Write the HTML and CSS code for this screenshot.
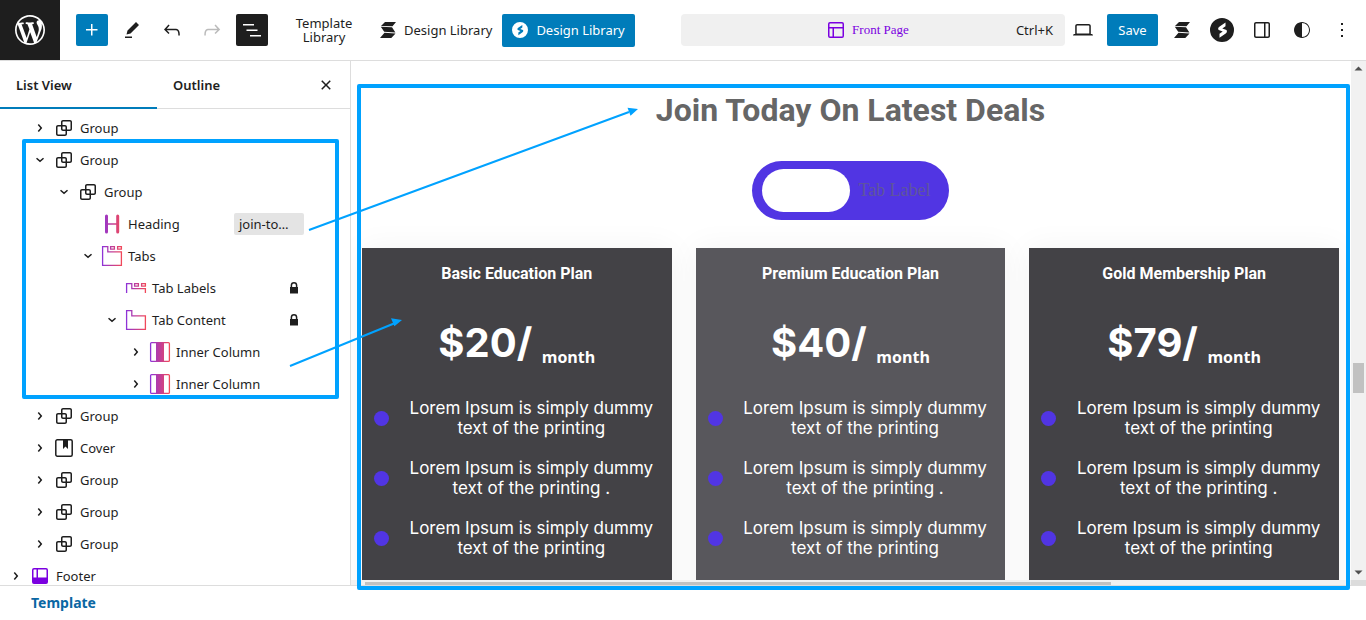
FILE: index.html
```html
<!DOCTYPE html>
<html lang="en">
<head>
  <meta charset="UTF-8">
  <meta name="viewport" content="width=device-width, initial-scale=1.0">
  <title>Front Page | Site Editor</title>
  <link rel="stylesheet" href="styles.css">
</head>
<body>
  <!-- shared icons -->
  <svg class="sprite" aria-hidden="true">
    <defs>
      <linearGradient id="pink" gradientUnits="userSpaceOnUse" x1="2" y1="0" x2="22" y2="0">
        <stop offset="0" stop-color="#8c33da"/>
        <stop offset="1" stop-color="#f34957"/>
      </linearGradient>
      <symbol id="right" viewBox="0 0 24 24"><path d="M10.86 8.04l3.42 3.99-3.42 3.99-1.14-.98 2.58-3.01-2.58-3.01z"/></symbol>
      <symbol id="down" viewBox="0 0 24 24"><path d="M8.04 10.86l3.99 3.42 3.99-3.42-.98-1.14-3.01 2.58-3.01-2.58z"/></symbol>
      <symbol id="group" viewBox="0 0 24 24"><path d="M18 4h-7c-1.1 0-2 .9-2 2v3H6c-1.1 0-2 .9-2 2v7c0 1.1.9 2 2 2h7c1.1 0 2-.9 2-2v-3h3c1.1 0 2-.9 2-2V6c0-1.1-.9-2-2-2zm-4.5 14c0 .3-.2.5-.5.5H6c-.3 0-.5-.2-.5-.5v-7c0-.3.2-.5.5-.5h3V13c0 1.1.9 2 2 2h2.5v3zm0-4.5H11c-.3 0-.5-.2-.5-.5v-2.5H13c.3 0 .5.2.5.5v2.5zm5-.5c0 .3-.2.5-.5.5h-3V11c0-1.1-.9-2-2-2h-2.5V6c0-.3.2-.5.5-.5h7c.3 0 .5.2.5.5v7z"/></symbol>
      <symbol id="cover" viewBox="0 0 24 24"><rect x="3.8" y="3.8" width="16.4" height="16.4" rx="1.5" fill="none" stroke="currentColor" stroke-width="1.5"/><path d="M11 4h5v9l-2.5-2.5L11 13z"/></symbol>
      <symbol id="lock" viewBox="0 0 24 24"><path d="M8 11h8v6.5H8z"/><path d="M9.4 11.5V9.3a2.6 2.6 0 0 1 5.2 0v2.2" fill="none" stroke="currentColor" stroke-width="1.5"/></symbol>
      <symbol id="heading" viewBox="0 0 24 24"><path fill="url(#pink)" d="M5 4a1.5 1.5 0 0 1 3 0v7.2h8.2V4a1.5 1.5 0 0 1 3 0v16a1.5 1.5 0 0 1-3 0v-7.2H8V20a1.5 1.5 0 0 1-3 0z"/></symbol>
      <symbol id="tabs" viewBox="0 0 24 24"><path fill="none" stroke="url(#pink)" stroke-width="1.3" d="M2.6 2.6h5.2v5.2h13.6v13.6H2.6zM10.6 2.6h3.8v2.6h-3.8zM17.6 2.6h3.8v2.6h-3.8z"/></symbol>
      <symbol id="labels" viewBox="0 0 24 24"><path fill="none" stroke="url(#pink)" stroke-width="1.3" d="M2.6 17V7.6h5.2v5h13.6V17M10.6 7.6h3.8v2.6h-3.8zM17.6 7.6h3.8v2.6h-3.8z"/></symbol>
      <symbol id="content" viewBox="0 0 24 24"><path fill="none" stroke="url(#pink)" stroke-width="1.3" d="M2.6 2.6h5.2v5.2h13.6v13.6H2.6z"/></symbol>
      <symbol id="column" viewBox="0 0 24 24"><rect x="2.6" y="2.6" width="18.8" height="18.8" rx="1" fill="none" stroke="url(#pink)" stroke-width="1.3"/><path fill="url(#pink)" d="M8 2.5h8v19H8z"/></symbol>
      <symbol id="ess" viewBox="0 0 16 16"><path d="M5 0h11l-3.5 4.2L1 4zM.8 4.8L12 5.3l3.4 5.2-11.2-.7zM4.5 10.8l11 .6L11.300 16H0z"/></symbol>
      <symbol id="bolt" viewBox="0 0 24 24"><path fill-rule="evenodd" d="M12 0a12 12 0 1 0 0 24 12 12 0 0 0 0-24zm3.5 4.5v3.700l-3.2 2.2 4.2 1.5c.8 1.3.4 2.600-.8 3.5l-6.200 4.300v-3.900l3.200-2.200-4-1.500c-.9-1.2-.6-2.600.6-3.400z"/></symbol>
    </defs>
  </svg>

  <header class="topbar">
    <a class="logo" href="#" aria-label="Site home">
      <svg viewBox="-2 -2 24 24"><path d="M20 10c0-5.51-4.49-10-10-10C4.48 0 0 4.49 0 10c0 5.52 4.48 10 10 10 5.51 0 10-4.48 10-10zM7.78 15.37L4.37 6.22c.55-.02 1.17-.08 1.17-.08.5-.06.44-1.13-.06-1.11 0 0-1.45.11-2.37.11-.18 0-.37 0-.58-.01C4.12 2.69 6.87 1.11 10 1.11c2.33 0 4.45.87 6.05 2.34-.68-.11-1.65.39-1.65 1.58 0 .74.45 1.36.9 2.1.35.61.55 1.36.55 2.46 0 1.49-1.4 5-1.4 5l-3.03-8.37c.54-.02.82-.17.82-.17.5-.05.44-1.25-.06-1.22 0 0-1.44.12-2.38.12-.87 0-2.33-.12-2.33-.12-.5-.03-.56 1.2-.06 1.22l.92.08 1.26 3.41zM17.41 10c.24-.64.74-1.87.43-4.25.7 1.29 1.05 2.71 1.05 4.25 0 3.29-1.73 6.24-4.4 7.78.97-2.59 1.94-5.2 2.92-7.78zM6.1 18.09C3.12 16.65 1.11 13.53 1.11 10c0-1.3.23-2.48.72-3.59C3.25 10.3 4.67 14.2 6.1 18.09zm4.03-6.63l2.58 6.98c-.86.29-1.76.45-2.71.45-.79 0-1.57-.11-2.29-.33.81-2.38 1.62-4.74 2.42-7.1z"/></svg>
    </a>
    <div class="tools">
      <button class="tool primary" aria-label="Add block"><svg class="icon" viewBox="0 0 24 24"><path d="M11 12.5V17.5H12.5V12.5H17.5V11H12.5V6H11V11H6V12.5H11Z"/></svg></button>
      <button class="tool" aria-label="Edit"><svg class="icon" viewBox="0 0 24 24"><path d="m19 7-3-3-8.5 8.5-1 4 4-1L19 7Zm-7 11.5H5V20h7v-1.5Z"/></svg></button>
      <button class="tool" aria-label="Undo"><svg class="icon" viewBox="0 0 24 24"><path d="M18.3 11.7c-.6-.6-1.4-.9-2.3-.9H6.7l2.9-3.3-1.1-1-4.5 5L8.5 16l1-1-2.7-2.7H16c.5 0 .9.2 1.3.5 1 1 1 3.4 1 4.5v.3h1.5v-.2c0-1.5 0-4.3-1.5-5.7z"/></svg></button>
      <button class="tool" aria-label="Redo" disabled><svg class="icon" viewBox="0 0 24 24"><path d="M15.6 6.5l-1.1 1 2.9 3.3H8c-.9 0-1.7.3-2.3.9-1.4 1.5-1.4 4.2-1.4 5.6v.2h1.5v-.3c0-1.1 0-3.5 1-4.5.3-.3.7-.5 1.3-.5h9.2L14.5 15l1.1 1.1 4.6-4.6-4.6-5z"/></svg></button>
      <button class="tool dark" aria-label="List view"><svg class="icon" viewBox="0 0 24 24"><path d="M3 6h11v1.5H3V6Zm3.5 5.5h11V13h-11v-1.5ZM21 17H10v1.5h11V17Z"/></svg></button>
    </div>
    <div class="libraries">
      <button class="template-library">Template Library</button>
      <button class="library"><svg class="small-icon"><use href="#ess"/></svg>Design Library</button>
      <button class="library primary"><svg class="small-icon"><use href="#bolt"/></svg>Design Library</button>
    </div>
    <button class="command">
      <span class="page-name"><svg class="icon" viewBox="0 0 24 24"><path d="M18 5.5H6a.5.5 0 00-.5.5v3h13V6a.5.5 0 00-.5-.5zm.5 5H10v8h8a.5.5 0 00.5-.5v-7.5zm-10 0h-3V18a.5.5 0 00.5.5h2.5v-8zM6 4h12a2 2 0 012 2v12a2 2 0 01-2 2H6a2 2 0 01-2-2V6a2 2 0 012-2z" fill-rule="evenodd"/></svg>Front Page</span>
      <span>Ctrl+K</span>
    </button>
    <div class="settings">
      <button class="tool" aria-label="View"><svg class="icon" viewBox="0 0 24 24"><path d="M20.5 16h-.7V8c0-1.1-.9-2-2-2H6.2c-1.1 0-2 .9-2 2v8h-.7c-.8 0-1.5.7-1.5 1.5h20c0-.8-.7-1.5-1.5-1.5zM5.7 8c0-.3.2-.5.5-.5h11.6c.3 0 .5.2.5.5v7.6H5.7V8z"/></svg></button>
      <button class="save primary">Save</button>
      <button class="tool" aria-label="Blocks settings"><svg class="small-icon"><use href="#ess"/></svg></button>
      <button class="tool" aria-label="Page settings"><svg class="icon"><use href="#bolt"/></svg></button>
      <button class="tool" aria-label="Sidebar"><svg class="icon" viewBox="0 0 24 24"><path d="M18 4H6c-1.1 0-2 .9-2 2v12c0 1.1.9 2 2 2h12c1.1 0 2-.9 2-2V6c0-1.1-.9-2-2-2zm-4 14.5H6c-.3 0-.5-.2-.5-.5V6c0-.3.2-.5.5-.5h8v13zm4.5-.5c0 .3-.2.5-.5.5h-2.5v-13H18c.3 0 .5.2.5.5v12z"/></svg></button>
      <button class="tool" aria-label="Styles"><svg class="icon" viewBox="0 0 24 24"><path d="M12 4c-4.4 0-8 3.6-8 8s3.6 8 8 8 8-3.6 8-8-3.6-8-8-8zm0 15V5c3.9 0 7 3.1 7 7s-3.1 7-7 7z"/></svg></button>
      <button class="tool" aria-label="Options"><svg class="icon" viewBox="0 0 24 24"><path d="M13 19h-2v-2h2v2zm0-6h-2v-2h2v2zm0-6h-2V5h2v2z"/></svg></button>
    </div>
  </header>

  <div class="editor">
    <aside class="sidebar">
      <div class="sidebar-tabs">
        <button class="tab active">List View</button>
        <button class="tab">Outline</button>
        <button class="tool close" aria-label="Close"><svg class="icon" viewBox="0 0 24 24"><path d="M12 13.06l3.712 3.713 1.061-1.06L13.061 12l3.712-3.712-1.06-1.06L12 10.938 8.288 7.227l-1.061 1.06L10.939 12l-3.712 3.712 1.06 1.061L12 13.061z"/></svg></button>
      </div>
      <ul class="tree">
        <li class="level-1"><svg class="icon"><use href="#right"/></svg><svg class="icon"><use href="#group"/></svg><a href="#">Group</a></li>
        <li class="level-1"><svg class="icon"><use href="#down"/></svg><svg class="icon"><use href="#group"/></svg><a href="#">Group</a></li>
        <li class="level-2"><svg class="icon"><use href="#down"/></svg><svg class="icon"><use href="#group"/></svg><a href="#">Group</a></li>
        <li class="level-4"><svg class="icon"><use href="#heading"/></svg><a href="#">Heading</a><span class="anchor">join-to…</span></li>
        <li class="level-3"><svg class="icon"><use href="#down"/></svg><svg class="icon"><use href="#tabs"/></svg><a href="#">Tabs</a></li>
        <li class="level-5"><svg class="icon"><use href="#labels"/></svg><a href="#">Tab Labels</a><svg class="icon lock"><use href="#lock"/></svg></li>
        <li class="level-4"><svg class="icon"><use href="#down"/></svg><svg class="icon"><use href="#content"/></svg><a href="#">Tab Content</a><svg class="icon lock"><use href="#lock"/></svg></li>
        <li class="level-5"><svg class="icon"><use href="#right"/></svg><svg class="icon"><use href="#column"/></svg><a href="#">Inner Column</a></li>
        <li class="level-5"><svg class="icon"><use href="#right"/></svg><svg class="icon"><use href="#column"/></svg><a href="#">Inner Column</a></li>
        <li class="level-1"><svg class="icon"><use href="#right"/></svg><svg class="icon"><use href="#group"/></svg><a href="#">Group</a></li>
        <li class="level-1"><svg class="icon"><use href="#right"/></svg><svg class="icon"><use href="#cover"/></svg><a href="#">Cover</a></li>
        <li class="level-1"><svg class="icon"><use href="#right"/></svg><svg class="icon"><use href="#group"/></svg><a href="#">Group</a></li>
        <li class="level-1"><svg class="icon"><use href="#right"/></svg><svg class="icon"><use href="#group"/></svg><a href="#">Group</a></li>
        <li class="level-1"><svg class="icon"><use href="#right"/></svg><svg class="icon"><use href="#group"/></svg><a href="#">Group</a></li>
        <li><svg class="icon"><use href="#right"/></svg><svg class="icon purple" viewBox="0 0 24 24"><path fill-rule="evenodd" d="M18 5.5h-8v8h8.5V6a.5.5 0 00-.5-.5zm-9.5 8h-3V6a.5.5 0 01.5-.5h2.5v8zM6 4h12a2 2 0 012 2v12a2 2 0 01-2 2H6a2 2 0 01-2-2V6a2 2 0 012-2z"/></svg><a href="#">Footer</a></li>
      </ul>
    </aside>

    <div class="stage">
      <main class="canvas">
        <h1>Join Today On Latest Deals</h1>
        <div class="switch">
          <button class="switch-on" aria-label="First tab"></button>
          <button>Tab Label</button>
        </div>
        <div class="plans">
          <section class="plan">
            <h2>Basic Education Plan</h2>
            <p class="price">$20/ <span>month</span></p>
            <ul>
              <li><span>Lorem Ipsum is simply dummy text of the printing</span></li>
              <li><span>Lorem Ipsum is simply dummy text of the printing .</span></li>
              <li><span>Lorem Ipsum is simply dummy text of the printing</span></li>
            </ul>
          </section>
          <section class="plan light">
            <h2>Premium Education Plan</h2>
            <p class="price">$40/ <span>month</span></p>
            <ul>
              <li><span>Lorem Ipsum is simply dummy text of the printing</span></li>
              <li><span>Lorem Ipsum is simply dummy text of the printing .</span></li>
              <li><span>Lorem Ipsum is simply dummy text of the printing</span></li>
            </ul>
          </section>
          <section class="plan">
            <h2>Gold Membership Plan</h2>
            <p class="price">$79/ <span>month</span></p>
            <ul>
              <li><span>Lorem Ipsum is simply dummy text of the printing</span></li>
              <li><span>Lorem Ipsum is simply dummy text of the printing .</span></li>
              <li><span>Lorem Ipsum is simply dummy text of the printing</span></li>
            </ul>
          </section>
        </div>
      </main>
      <div class="scroll-y">
        <svg viewBox="0 0 15 15"><path d="M3.5 9.5h8l-4-4z"/></svg>
        <div class="thumb"></div>
        <svg viewBox="0 0 15 15"><path d="M3.5 5.5h8l-4 4z"/></svg>
      </div>
      <div class="scroll-x"><div class="thumb"></div></div>
      <div class="corner"></div>
    </div>
  </div>

  <footer class="breadcrumb"><a href="#">Template</a></footer>

  <!-- callouts drawn over the editor -->
  <div class="frame frame-list"></div>
  <div class="frame frame-canvas"></div>
  <svg class="arrows" aria-hidden="true">
    <path class="line" d="M309 230L629 112M290 366L394 323.5"/>
    <path d="M638 109l-10.5-1.3 3 8zM402 320l-11-1.8 3.4 8z"/>
  </svg>
</body>
</html>
```

FILE: styles.css
```css
* {
  box-sizing: border-box;
}
body {
  margin: 0;
  height: 100vh;
  display: flex;
  flex-direction: column;
  position: relative;
  overflow: hidden;
  background: #fff;
  color: #1e1e1e;
  font-family: "Noto Sans", "Open Sans", sans-serif;
  font-size: 13px;
}
button {
  border: none;
  background: none;
  padding: 0;
  color: inherit;
  font: inherit;
  cursor: pointer;
}
a {
  color: inherit;
  text-decoration: none;
}
h1, h2, p, ul {
  margin: 0;
  padding: 0;
}
ul {
  list-style: none;
}
svg {
  fill: currentColor;
  flex: none;
}
.sprite {
  position: absolute;
  width: 0;
  height: 0;
}
.icon {
  width: 24px;
  height: 24px;
}
.small-icon {
  width: 16px;
  height: 16px;
}

/* top bar */
.topbar {
  display: flex;
  align-items: center;
  flex: none;
  padding-right: 8px;
  border-bottom: 1px solid #ddd;
}
.logo {
  width: 60px;
  height: 60px;
  display: flex;
  align-items: center;
  justify-content: center;
  background: #1e1e1e;
  color: #fff;
}
.logo svg {
  width: 36px;
  height: 36px;
}
.tools, .settings {
  display: flex;
  gap: 8px;
}
.tools {
  margin-left: 16px;
}
.tool {
  width: 32px;
  height: 32px;
  display: flex;
  align-items: center;
  justify-content: center;
  border-radius: 2px;
}
.tool:disabled {
  color: #bbb;
}
.primary {
  background: #007cba;
  color: #fff;
  border-radius: 2px;
}
.dark {
  background: #1e1e1e;
  color: #fff;
}
.libraries {
  display: flex;
  align-items: center;
  margin-left: 24px;
}
.template-library {
  width: 64px;
  line-height: 14px;
}
.library {
  height: 33px;
  display: flex;
  align-items: center;
  gap: 8px;
  padding: 0 10px;
  white-space: nowrap;
}
.template-library + .library {
  margin-left: 14px;
}
.command {
  flex: 1;
  max-width: 384px;
  height: 32px;
  display: flex;
  align-items: center;
  padding: 0 12px;
  margin-left: auto;
  border-radius: 4px;
  background: #f0f0f0;
}
.page-name {
  flex: 1;
  display: flex;
  align-items: center;
  justify-content: center;
  gap: 4px;
  padding-left: 24px;
  color: #7b00e0;
  font-family: "Liberation Serif", serif;
}
.settings {
  margin-left: 2px;
}
.save {
  width: 51px;
  height: 32px;
}

/* list view */
.editor {
  flex: 1;
  min-height: 0;
  display: flex;
}
.sidebar {
  width: 351px;
  flex: none;
  overflow: hidden;
  border-right: 1px solid #ddd;
}
.sidebar-tabs {
  display: flex;
  height: 48px;
  border-bottom: 1px solid #ddd;
}
.tab {
  height: 48px;
  padding: 0 16px;
  text-align: left;
  font-weight: 600;
}
.active {
  width: 157px;
  flex: none;
  border-bottom: 2px solid #007cba;
  padding-top: 2px;
}
.close {
  margin: 8px 8px 0 auto;
}
.tree {
  padding-top: 3px;
}
.tree li {
  display: flex;
  align-items: center;
  height: 32px;
  padding: 0 44px 0 4px;
}
.tree a {
  margin-left: 4px;
}
.tree .level-1 {
  padding-left: 28px;
}
.tree .level-2 {
  padding-left: 52px;
}
.tree .level-3 {
  padding-left: 76px;
}
.tree .level-4 {
  padding-left: 100px;
}
.tree .level-5 {
  padding-left: 124px;
}
.anchor {
  width: 70px;
  margin: 0 2px 0 auto;
  padding: 2px 5px;
  border-radius: 2px;
  background: #e4e4e4;
}
.lock {
  margin-left: auto;
}
.purple {
  color: #7b00e0;
}

/* page preview */
.stage {
  flex: 1;
  min-width: 0;
  display: grid;
  grid-template-columns: 1fr 15px;
  grid-template-rows: minmax(0, 1fr) 5px;
}
.canvas {
  overflow: hidden;
  padding: 25px 12px 0 11px;
}
.canvas h1 {
  color: #666;
  font-family: "Roboto", sans-serif;
  font-size: 32px;
  line-height: 48px;
  text-align: center;
}
.switch {
  display: flex;
  width: fit-content;
  margin: 27px auto 28px;
  padding: 8px 10px;
  border-radius: 30px;
  background: #5135e3;
}
.switch button {
  min-width: 88px;
  height: 43px;
  padding: 0 8px;
  border-radius: 22px;
  color: #5f559c;
  font-family: "Liberation Serif", serif;
  font-size: 18px;
}
.switch .switch-on {
  background: #fff;
}
.plans {
  display: grid;
  grid-template-columns: repeat(3, 1fr);
  gap: 24px;
}
.plan {
  height: 400px;
  padding: 14px 12px;
  background: #434246;
  color: #fff;
  text-align: center;
  box-shadow: 0 0 30px rgba(0, 0, 0, 0.05);
}
.light {
  background: #58575c;
}
.plan h2 {
  font-family: "Roboto", sans-serif;
  font-size: 16px;
  line-height: 24px;
}
.price {
  margin: 33px 0 31px;
  font-family: "Inter", sans-serif;
  font-size: 40px;
  font-weight: 700;
  line-height: 48px;
}
.price span {
  font-family: "Open Sans", sans-serif;
  font-size: 16px;
  line-height: 16px;
  vertical-align: -6px;
}
.plan li {
  display: flex;
  align-items: center;
  gap: 14px;
  margin-bottom: 20px;
  font-family: "Inter", sans-serif;
  font-size: 17px;
  line-height: 20px;
}
.plan li span {
  flex: 1;
}
.plan li::before {
  content: "";
  width: 15px;
  height: 15px;
  border-radius: 50%;
  background: #5135e3;
}

/* scrollbars */
.scroll-y {
  display: flex;
  flex-direction: column;
  background: #f1f1f1;
  color: #505050;
}
.scroll-y svg {
  width: 15px;
  height: 15px;
}
.scroll-y .thumb {
  width: 11px;
  height: 30px;
  margin: auto 2px 172px;
  background: #c1c1c1;
}
.scroll-x {
  padding: 2px 240px 0 14px;
  background: #f1f1f1;
}
.scroll-x .thumb {
  height: 3px;
  background: #c1c1c1;
}
.corner {
  background: #dcdcdc;
}
.breadcrumb {
  flex: none;
  height: 35px;
  padding: 0 31px;
  border-top: 1px solid #ddd;
  color: #0a67a3;
  font-size: 14px;
  font-weight: 700;
  line-height: 34px;
}

/* callouts */
.frame {
  position: absolute;
  border: 4px solid #00a2ff;
  border-radius: 2px;
  pointer-events: none;
}
.frame-list {
  top: 139px;
  left: 22px;
  width: 317px;
  height: 260px;
}
.frame-canvas {
  top: 84px;
  left: 357px;
  right: 16px;
  bottom: 30px;
}
.arrows {
  position: absolute;
  top: 0;
  left: 0;
  width: 100%;
  height: 100%;
  color: #00a2ff;
  pointer-events: none;
}
.line {
  fill: none;
  stroke: currentColor;
  stroke-width: 2;
}
```
